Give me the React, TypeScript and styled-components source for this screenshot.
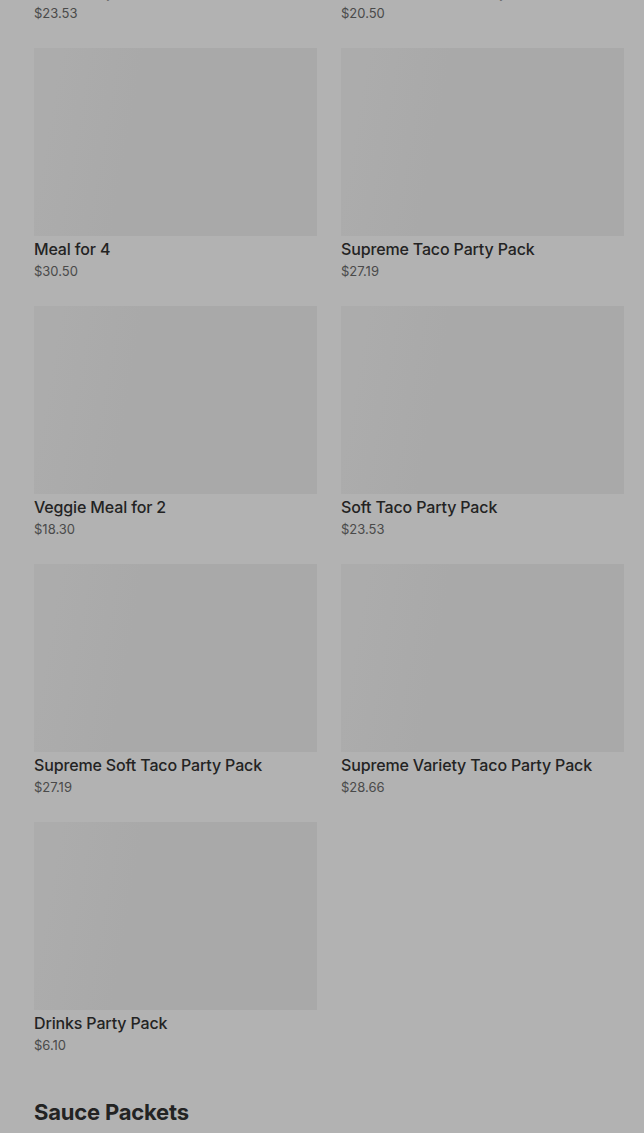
import styled, { createGlobalStyle } from "styled-components";

type Item = {
  name: string;
  price: string;
};

const ITEMS: Item[] = [
  { name: "Taco Party Pack", price: "$23.53" },
  { name: "Burrito Supreme Party Pack", price: "$20.50" },
  { name: "Meal for 4", price: "$30.50" },
  { name: "Supreme Taco Party Pack", price: "$27.19" },
  { name: "Veggie Meal for 2", price: "$18.30" },
  { name: "Soft Taco Party Pack", price: "$23.53" },
  { name: "Supreme Soft Taco Party Pack", price: "$27.19" },
  { name: "Supreme Variety Taco Party Pack", price: "$28.66" },
  { name: "Drinks Party Pack", price: "$6.10" },
];

const GlobalStyle = createGlobalStyle`
  html, body {
    margin: 0;
    padding: 0;
    background: #ffffff;
  }
  body {
    font-family: Inter, "Noto Sans", Roboto, sans-serif;
    -webkit-font-smoothing: antialiased;
  }
`;

function App() {
  return (
    <>
      <GlobalStyle />
      <Page>
        <MenuSection>
          <Grid>
            {ITEMS.map((item) => (
              <Card key={item.name}>
                <Thumb />
                <Title>{item.name}</Title>
                <Price>{item.price}</Price>
              </Card>
            ))}
          </Grid>
        </MenuSection>
        <MenuSection>
          <SectionTitle>Sauce Packets</SectionTitle>
        </MenuSection>
      </Page>
      <Backdrop />
    </>
  );
}

const Page = styled.div`
  height: 1133px;
  overflow: hidden;
  background: #ffffff;
  padding: 0 20px 0 34px;
  box-sizing: border-box;
`;

const MenuSection = styled.section`
  &:first-child {
    margin-top: -210px;
  }
  & + & {
    margin-top: 42px;
  }
`;

const Grid = styled.div`
  display: grid;
  grid-template-columns: 1fr 1fr;
  column-gap: 24px;
  row-gap: 25px;
`;

const Card = styled.div`
  display: flex;
  flex-direction: column;
  cursor: pointer;
`;

const Thumb = styled.div`
  height: 188px;
  background: linear-gradient(100deg, #f7f7f7 0%, #f3f3f3 35%, #f3f3f3 100%);
`;

const Title = styled.div`
  margin-top: 2px;
  font-size: 16px;
  line-height: 22px;
  font-weight: 500;
  letter-spacing: -0.15px;
  color: #333333;
  white-space: nowrap;
  overflow: hidden;
  text-overflow: ellipsis;
`;

const Price = styled.div`
  margin-top: 2px;
  font-size: 13px;
  line-height: 19px;
  font-weight: 400;
  color: #6b6b6b;
`;

const SectionTitle = styled.h2`
  margin: 0;
  font-size: 22px;
  line-height: 30px;
  font-weight: 700;
  color: #333333;
  letter-spacing: -0.2px;
`;

const Backdrop = styled.div`
  position: fixed;
  inset: 0;
  background: rgba(0, 0, 0, 0.3);
`;

export default App;
